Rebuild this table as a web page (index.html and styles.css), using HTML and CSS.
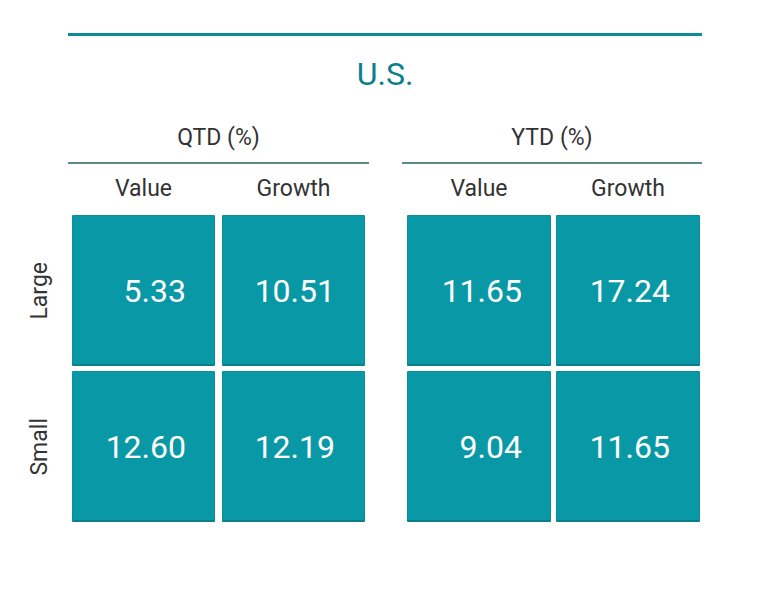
FILE: index.html
```html
<!DOCTYPE html>
<html lang="en">
<head>
<meta charset="utf-8">
<title>U.S. style returns</title>
<link rel="stylesheet" href="styles.css">
</head>
<body>
<div class="chart">
  <div class="rule"></div>
  <div class="title">U.S.</div>

  <div class="group-head qtd">QTD (%)</div>
  <div class="group-head ytd">YTD (%)</div>

  <div class="pair qtd subs"><div class="sub">Value</div><div class="sub">Growth</div></div>
  <div class="pair ytd subs"><div class="sub">Value</div><div class="sub">Growth</div></div>

  <div class="row-label r1"><span>Large</span></div>
  <div class="pair qtd r1"><div class="cell">5.33</div><div class="cell">10.51</div></div>
  <div class="pair ytd r1"><div class="cell">11.65</div><div class="cell">17.24</div></div>

  <div class="row-label r2"><span>Small</span></div>
  <div class="pair qtd r2"><div class="cell">12.60</div><div class="cell">12.19</div></div>
  <div class="pair ytd r2"><div class="cell">9.04</div><div class="cell">11.65</div></div>
</div>
</body>
</html>
```

FILE: styles.css
```css
html, body {
  margin: 0;
  padding: 0;
  background: #ffffff;
}

body {
  font-family: Roboto, "Liberation Sans", sans-serif;
  color: #333333;
}

.chart {
  display: grid;
  grid-template-columns: 40px 301px 33px 300px;
  margin-left: 28px;
  padding-top: 33px;
}

.rule {
  grid-column: 2 / 5;
  height: 3px;
  background: #0a8d99;
}

.title {
  grid-column: 2 / 5;
  margin-top: 20px;
  text-align: center;
  font-size: 32px;
  line-height: 36px;
  color: #0b7f8c;
}

.group-head {
  margin-top: 34px;
  padding-bottom: 12px;
  border-bottom: 2px solid #5f8b86;
  text-align: center;
  font-size: 23px;
  line-height: 24px;
  color: #333333;
}

.qtd { grid-column: 2; }
.ytd { grid-column: 4; }

.pair {
  display: flex;
}

.pair.qtd {
  padding: 0 4px;
  gap: 7px;
}

.pair.ytd {
  padding-left: 5px;
  gap: 5px;
}

.pair.qtd > * { flex: 0 0 143px; }
.pair.ytd > * { flex: 0 0 144px; }

.subs {
  margin-top: 13px;
}

.sub {
  text-align: center;
  font-size: 23px;
  line-height: 24px;
  color: #333333;
}

.r1 { margin-top: 14px; }
.r2 { margin-top: 5px; }

.row-label {
  grid-column: 1;
  display: flex;
  align-items: center;
  justify-content: flex-start;
}

.row-label span {
  writing-mode: vertical-rl;
  transform: rotate(180deg);
  font-size: 23px;
  line-height: 24px;
  color: #333333;
}

.cell {
  height: 151px;
  box-sizing: border-box;
  display: flex;
  align-items: center;
  justify-content: flex-end;
  padding-right: 29px;
  background: #0999a6;
  border-radius: 2px;
  box-shadow: inset 0 -2px 0 #0a7f8b, inset -1px 0 0 #0b8c98, inset 1px 0 0 #0b8f9b, inset 0 1px 0 #0b8f9b;
  color: #ffffff;
  font-size: 32px;
  line-height: 36px;
}

.cell + .cell {
  padding-right: 30px;
}
```
